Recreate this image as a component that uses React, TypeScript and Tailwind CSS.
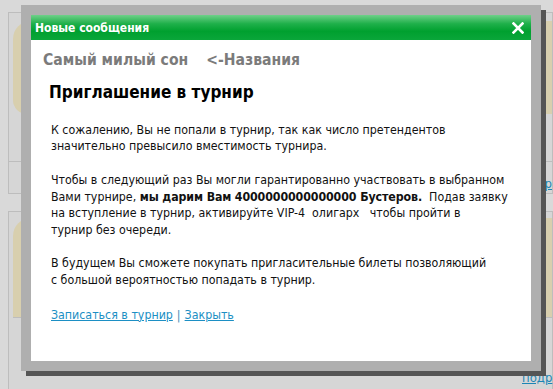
import React from 'react';

const font = "font-['DejaVu_Sans_Condensed','DejaVu_Sans',sans-serif]";

const App: React.FC = () => {
  return (
    <div className={`relative w-[553px] h-[389px] overflow-hidden bg-[#d9d9d9] ${font}`}>
      {/* page behind the overlay */}
      <div className="flex flex-col gap-[17px] pl-2 pt-3">
        <div className="h-[182px] border border-[#bdbdbd] bg-[#d6d6d6] flex flex-col">
          <div className="ml-1 mt-2 h-[95px] rounded-tl-[18px] rounded-bl-[14px] bg-[#d8cfae]" />
          <div className="mt-[47px] border-t border-[#bdbdbd]" />
          <div className="flex justify-end pt-[12px]">
            <a className="text-[13px] text-[#1c86b5] underline">подр</a>
          </div>
        </div>
        <div className="h-[200px] border border-[#bdbdbd] bg-[#d6d6d6] flex flex-col">
          <div className="ml-1 mt-1.5 h-[100px] rounded-tl-[18px] bg-[#d8cfae] border-b border-[#bdbdbd]" />
          <div className="mt-auto flex h-[16px] pl-[109px]">
            <div className="border-l border-[#bdbdbd]" />
          </div>
        </div>
      </div>
      <div className="absolute left-[522px] bottom-[0px]">
        <a className="text-[13px] text-[#1c86b5] underline">подр</a>
      </div>

      {/* modal */}
      <div className="absolute left-[21px] top-[5px] w-[520px] h-[366px] bg-[#afafaf] p-[10px] shadow-[5px_5px_0_0_#555555]">
        <div className="flex h-full flex-col bg-white">
          <div className="flex h-[25px] items-center justify-between bg-[linear-gradient(#6fd089,#1fb04a_35%,#00a02f_65%,#0aa63a)] pl-[4px] pr-[7px]">
            <span className="text-[12px] font-bold text-white">Новые сообщения</span>
            <svg width="12" height="12" viewBox="0 0 12 12">
              <path d="M1.5 1.5 L10.5 10.5 M10.5 1.5 L1.5 10.5" stroke="#ffffff" strokeWidth="2.6" strokeLinecap="square" />
            </svg>
          </div>
          <div className="flex gap-[18px] pl-[12px] pt-[9px] text-[15.6px] font-bold text-[#7b7b7b]">
            <span>Самый милый сон</span>
            <span>&lt;-Названия</span>
          </div>
          <h1 className="pl-[18px] pt-[8px] text-[17px] font-bold text-black">Приглашение в турнир</h1>
          <div className="pl-[20px] pt-[16px] text-[12.3px] leading-[16.6px] text-[#111] whitespace-nowrap">
            <p>
              К сожалению, Вы не попали в турнир, так как число претендентов
              <br />
              значительно превысило вместимость турнира.
            </p>
            <p className="mt-[17px]">
              Чтобы в следующий раз Вы могли гарантированно участвовать в выбранном
              <br />
              Вами турнире, <b className="tracking-[-0.1px]">мы дарим Вам</b> <b className="tracking-[-0.1px]">4000000000000000 Бустеров.</b>&nbsp; Подав заявку
              <br />
              на вступление в турнир, активируйте VIP-4&nbsp;&nbsp;олигарх&nbsp;&nbsp;&nbsp;чтобы пройти в
              <br />
              турнир без очереди.
            </p>
            <p className="mt-[17px]">
              В будущем Вы сможете покупать пригласительные билеты позволяющий
              <br />
              с большой вероятностью попадать в турнир.
            </p>
            <div className="mt-[18px] flex items-center gap-[4px] text-[#1c8fc4]">
              <a className="underline">Записаться в турнир</a>
              <span className="text-[#3a8fb8]">|</span>
              <a className="underline">Закрыть</a>
            </div>
          </div>
        </div>
      </div>
    </div>
  );
};

export default App;
